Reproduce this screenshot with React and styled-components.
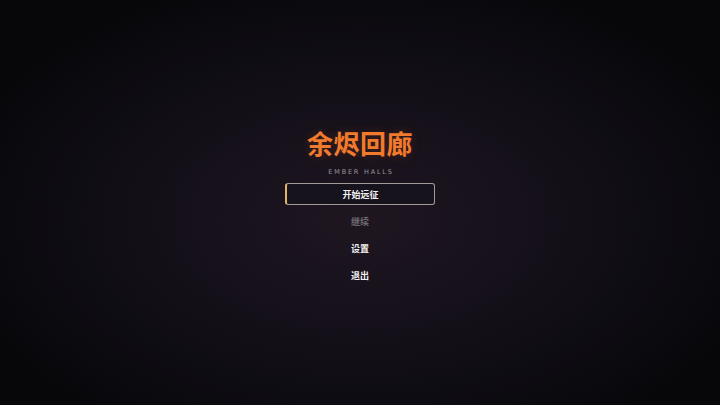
import React from 'react'
import styled, { createGlobalStyle } from 'styled-components'

const GlobalStyle = createGlobalStyle`
  html, body {
    margin: 0;
    padding: 0;
    background: #08070b;
  }
  * {
    box-sizing: border-box;
  }
`

const menuItems = [
  { label: '开始远征', active: true },
  { label: '继续', disabled: true },
  { label: '设置' },
  { label: '退出' },
]

export default function App() {
  return (
    <>
      <GlobalStyle />
      <Screen>
        <Title>余烬回廊</Title>
        <Subtitle>EMBER HALLS</Subtitle>
        <Menu>
          {menuItems.map((item) => (
            <MenuItem key={item.label} $active={item.active} $disabled={item.disabled}>
              {item.label}
            </MenuItem>
          ))}
        </Menu>
      </Screen>
    </>
  )
}

const Screen = styled.div`
  width: 720px;
  height: 405px;
  display: flex;
  flex-direction: column;
  align-items: center;
  padding-top: 129px;
  font-family: 'Noto Sans CJK SC', 'Noto Sans', sans-serif;
  background: radial-gradient(
    ellipse 58% 62% at 50% 54%,
    #1f1620 0%,
    #18121c 30%,
    #110e16 60%,
    #0b0a0f 85%,
    #07070a 100%
  );
  overflow: hidden;
`

const Title = styled.h1`
  margin: 0;
  font-size: 26px;
  line-height: 28px;
  font-weight: 700;
  color: #f27a2c;
  letter-spacing: 0.5px;
  text-shadow: 0 0 12px rgba(240, 110, 40, 0.2);
`

const Subtitle = styled.div`
  margin-top: 10px;
  font-family: 'DejaVu Sans', sans-serif;
  font-size: 6.5px;
  line-height: 10px;
  letter-spacing: 1.8px;
  padding-left: 2px;
  color: #9a949e;
`

const Menu = styled.div`
  margin-top: 6px;
  display: flex;
  flex-direction: column;
  align-items: center;
  gap: 5px;
`

const MenuItem = styled.div`
  width: 150px;
  height: 22px;
  display: flex;
  align-items: center;
  justify-content: center;
  font-size: 9px;
  font-weight: 700;
  color: ${(p) => (p.$disabled ? '#6f6a74' : '#f4f1f2')};
  border-radius: 3px;
  border: 1px solid ${(p) => (p.$active ? '#a39a98' : 'transparent')};
  border-left: ${(p) => (p.$active ? '2px solid #e2b36a' : '1px solid transparent')};
  background: ${(p) => (p.$active ? '#16131d' : 'transparent')};
`
